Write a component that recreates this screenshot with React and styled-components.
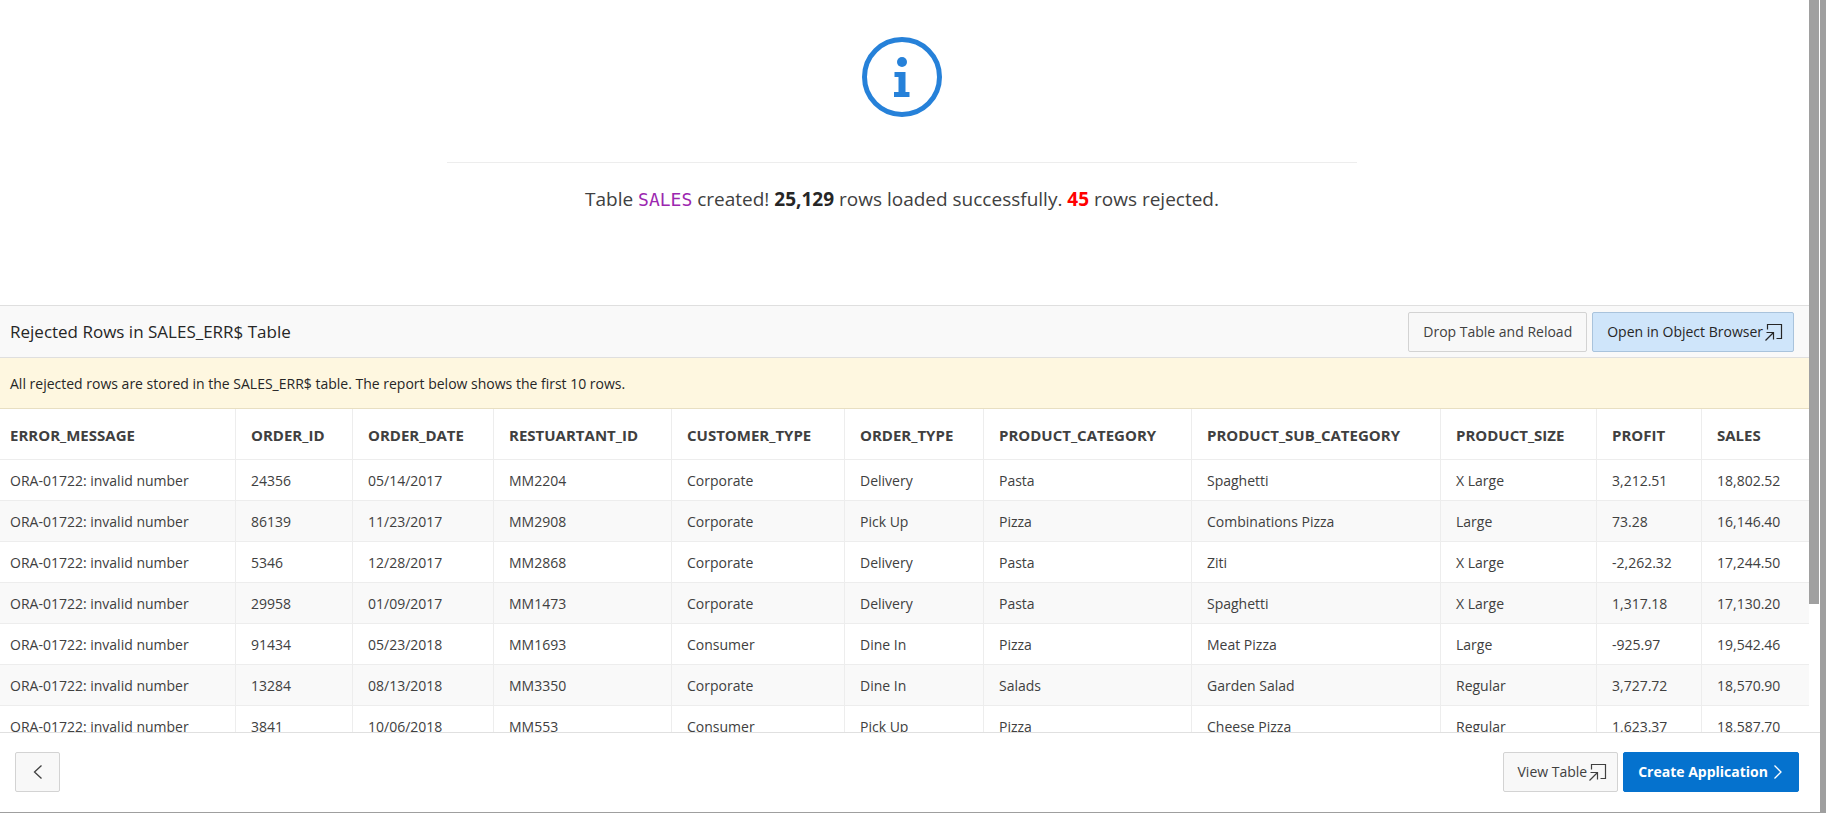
import React from "react";
import styled, { createGlobalStyle, css } from "styled-components";

const GlobalStyle = createGlobalStyle`
  *, *::before, *::after { box-sizing: border-box; }
  html, body { margin: 0; }
  body {
    font-family: "Open Sans", "Noto Sans", sans-serif;
    font-size: 14px;
    line-height: 20px;
    color: #404040;
    background: #fff;
  }
`;

const Backdrop = styled.div`
  height: 100vh;
  padding: 0 6px 1px 0;
  background: #9f9f9f;
`;

const Dialog = styled.div`
  height: 100%;
  display: flex;
  flex-direction: column;
  background: #fff;
  overflow: hidden;
`;

const Body = styled.div`
  flex: 1;
  min-height: 0;
  display: flex;
  padding-right: 1px;
`;

const Content = styled.main`
  flex: 1;
  min-width: 0;
  overflow: hidden;
`;

const ScrollTrack = styled.div`
  width: 10px;
`;

const ScrollThumb = styled.div`
  height: 604px;
  max-height: 83%;
  background: #a0a0a0;
`;

const Summary = styled.section`
  display: flex;
  flex-direction: column;
  align-items: center;
  padding: 37px 5px 90px 0;
`;

const Message = styled.p`
  width: 910px;
  max-width: 100%;
  margin: 45px 0 0;
  padding-top: 21px;
  border-top: 1px solid #ededed;
  text-align: center;
  font-size: 19px;
  line-height: 30px;
`;

const TableName = styled.code`
  font-family: "DejaVu Sans Mono", monospace;
  font-size: 18px;
  color: #9c27b0;
`;

const Count = styled.strong`
  font-weight: 700;
  color: ${(p) => (p.$danger ? "#ff0000" : "#262626")};
`;

const RegionHeader = styled.header`
  display: flex;
  align-items: center;
  gap: 5px;
  height: 53px;
  padding: 0 15px 0 10px;
  border-top: 1px solid #dfdfdf;
  border-bottom: 1px solid #dfdfdf;
  background: #f9f9f9;
`;

const RegionTitle = styled.h2`
  flex: 1;
  margin: 0;
  font-size: 17px;
  font-weight: 400;
  line-height: 24px;
  color: #262626;
`;

const Notice = styled.p`
  margin: 0;
  padding: 16px 10px 14px;
  border-bottom: 1px solid #e8dfc2;
  background: #fef7e0;
  color: #262626;
`;

const variants = {
  plain: css`
    background: #f8f8f8;
    border-color: #d3d3d3;
    color: #404040;
  `,
  info: css`
    background: #cfe5fa;
    border-color: #a9c3dc;
    color: #262626;
  `,
  primary: css`
    background: #0572ce;
    border-color: #0572ce;
    color: #fff;
    font-weight: 700;
  `,
};

const Button = styled.button`
  display: inline-flex;
  align-items: center;
  justify-content: center;
  height: 40px;
  padding: 0 14px;
  border: 1px solid;
  border-radius: 2px;
  font-family: inherit;
  font-size: 14px;
  line-height: 20px;
  white-space: nowrap;
  cursor: pointer;
  ${(p) => variants[p.$variant || "plain"]}
`;

const IconButton = styled(Button)`
  gap: 1px;
  padding: 0 10px 0 14px;
`;

const BackButton = styled(Button)`
  width: 45px;
  padding: 0;
  margin-right: auto;
`;

const Table = styled.table`
  width: 100%;
  table-layout: fixed;
  border-collapse: separate;
  border-spacing: 0;
`;

const Cell = styled.td`
  height: 41px;
  padding: 2px 15px 0;
  border-right: 1px solid #ededed;
  border-bottom: 1px solid #ededed;
  text-align: left;
  white-space: nowrap;
  &:first-child { padding-left: 10px; }
  &:last-child { border-right: 0; }
`;

const HeadCell = styled(Cell)`
  height: 51px;
  font-size: 15px;
  font-weight: 700;
`;

const Row = styled.tr`
  &:nth-child(even) { background: #f9f9f9; }
`;

const Footer = styled.footer`
  display: flex;
  gap: 5px;
  padding: 19px 21px 20px 15px;
  border-top: 1px solid #e0e0e0;
`;

const columns = [
  ["ERROR_MESSAGE", 236],
  ["ORDER_ID", 117],
  ["ORDER_DATE", 141],
  ["RESTUARTANT_ID", 178],
  ["CUSTOMER_TYPE", 173],
  ["ORDER_TYPE", 139],
  ["PRODUCT_CATEGORY", 208],
  ["PRODUCT_SUB_CATEGORY", 249],
  ["PRODUCT_SIZE", 156],
  ["PROFIT", 105],
  ["SALES", 107],
];

const error = "ORA-01722: invalid number";

const rows = [
  [error, "24356", "05/14/2017", "MM2204", "Corporate", "Delivery", "Pasta", "Spaghetti", "X Large", "3,212.51", "18,802.52"],
  [error, "86139", "11/23/2017", "MM2908", "Corporate", "Pick Up", "Pizza", "Combinations Pizza", "Large", "73.28", "16,146.40"],
  [error, "5346", "12/28/2017", "MM2868", "Corporate", "Delivery", "Pasta", "Ziti", "X Large", "-2,262.32", "17,244.50"],
  [error, "29958", "01/09/2017", "MM1473", "Corporate", "Delivery", "Pasta", "Spaghetti", "X Large", "1,317.18", "17,130.20"],
  [error, "91434", "05/23/2018", "MM1693", "Consumer", "Dine In", "Pizza", "Meat Pizza", "Large", "-925.97", "19,542.46"],
  [error, "13284", "08/13/2018", "MM3350", "Corporate", "Dine In", "Salads", "Garden Salad", "Regular", "3,727.72", "18,570.90"],
  [error, "3841", "10/06/2018", "MM553", "Consumer", "Pick Up", "Pizza", "Cheese Pizza", "Regular", "1,623.37", "18,587.70"],
];

const InfoIcon = () => (
  <svg width="80" height="80" viewBox="0 0 80 80" fill="#2681d9" aria-hidden="true">
    <circle cx="40" cy="40" r="37.5" fill="none" stroke="#2681d9" strokeWidth="5" />
    <circle cx="40" cy="25" r="5" />
    <path d="M32.5 35H43.5V55H47.5V60H32V55H36.5V40H32.5Z" />
  </svg>
);

const PopupIcon = () => (
  <svg width="19" height="20" viewBox="0 0 19 20" fill="none" stroke="currentColor" strokeWidth="1.2" aria-hidden="true">
    <path d="M3.5 7.5V2.5H17.5V16.5H12.5M2.5 10.5H9.5V17.5M9.5 10.5L1.5 18.5" />
  </svg>
);

const Chevron = ({ left }) => (
  <svg width="16" height="16" viewBox="0 0 16 16" fill="none" stroke="currentColor" strokeWidth="1.3" aria-hidden="true">
    <path d={left ? "M11.5 1.5L4.5 8L11.5 14.5" : "M6.5 1.5L13 8L6.5 14.5"} />
  </svg>
);

export default function App() {
  return (
    <>
      <GlobalStyle />
      <Backdrop>
        <Dialog>
          <Body>
            <Content>
              <Summary>
                <InfoIcon />
                <Message>
                  Table <TableName>SALES</TableName> created! <Count>25,129</Count> rows loaded
                  successfully. <Count $danger>45</Count> rows rejected.
                </Message>
              </Summary>
              <RegionHeader>
                <RegionTitle>Rejected Rows in SALES_ERR$ Table</RegionTitle>
                <Button type="button">Drop Table and Reload</Button>
                <IconButton type="button" $variant="info">
                  Open in Object Browser
                  <PopupIcon />
                </IconButton>
              </RegionHeader>
              <Notice>
                All rejected rows are stored in the SALES_ERR$ table. The report below shows the
                first 10 rows.
              </Notice>
              <Table>
                <colgroup>
                  {columns.map(([name, width]) => (
                    <col key={name} width={width} />
                  ))}
                </colgroup>
                <thead>
                  <tr>
                    {columns.map(([name]) => (
                      <HeadCell as="th" scope="col" key={name}>{name}</HeadCell>
                    ))}
                  </tr>
                </thead>
                <tbody>
                  {rows.map((row) => (
                    <Row key={row[1]}>
                      {row.map((value, i) => (
                        <Cell key={columns[i][0]}>{value}</Cell>
                      ))}
                    </Row>
                  ))}
                </tbody>
              </Table>
            </Content>
            <ScrollTrack>
              <ScrollThumb />
            </ScrollTrack>
          </Body>
          <Footer>
            <BackButton type="button" aria-label="Back">
              <Chevron left />
            </BackButton>
            <IconButton type="button">
              View Table
              <PopupIcon />
            </IconButton>
            <Button type="button" $variant="primary">
              Create Application
              <Chevron />
            </Button>
          </Footer>
        </Dialog>
      </Backdrop>
    </>
  );
}
